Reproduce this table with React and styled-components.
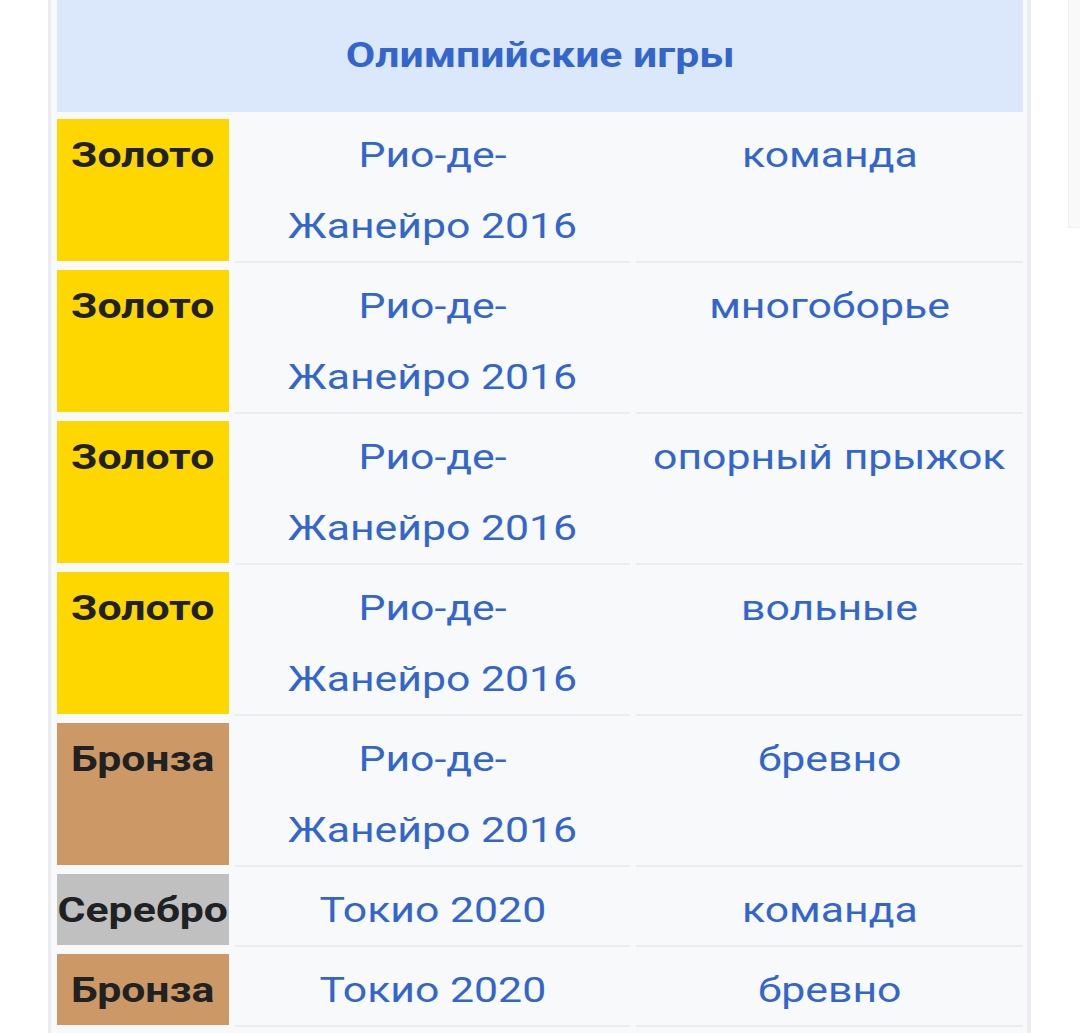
import React from "react";
import styled, { createGlobalStyle } from "styled-components";

const GlobalStyle = createGlobalStyle`
  html, body {
    margin: 0;
    padding: 0;
    background: #ffffff;
    overflow: hidden;
  }
  body {
    font-family: Roboto, "Noto Sans", "Liberation Sans", sans-serif;
  }
`;

const STRETCH = 1.222;

const Page = styled.div`
  display: flex;
  align-items: flex-start;
  width: 1080px;
  height: 1033px;
  overflow: hidden;
`;

const Infobox = styled.div`
  flex-shrink: 0;
  margin-left: 48px;
  width: 966px;
  background: #f8f9fa;
  border-left: 3px solid #eaecf0;
  border-right: 4px solid #eaecf0;
  padding: 0 4px 40px 6px;
  display: flex;
  flex-direction: column;
  gap: 7px;
`;

const Header = styled.div`
  background: #dbe8fc;
  color: #3366cc;
  font-weight: 700;
  font-size: 35px;
  line-height: 71px;
  text-align: center;
  padding: 19px 0 22px;
`;

const Text = styled.span`
  display: inline-block;
  max-width: ${(p) => (p.$max ? `${p.$max}px` : "none")};
  transform: translateY(1px) scaleX(${STRETCH});
  transform-origin: center center;
`;

const Row = styled.div`
  display: grid;
  grid-template-columns: 172px 395px 387px;
  column-gap: 6px;
`;

const MedalCell = styled.div`
  background: ${(p) => p.$bg};
  background-clip: padding-box;
  border-bottom: 2px solid #f8f9fa;
  color: #202122;
  font-weight: 700;
  font-size: 35px;
  line-height: 71px;
  text-align: center;
  white-space: nowrap;
`;

const DataCell = styled.div`
  border-bottom: 2px solid #eaecf0;
  color: #3366cc;
  font-weight: 400;
  font-size: 35px;
  line-height: 71px;
  text-align: center;
`;

const SideBox = styled.div`
  flex-shrink: 0;
  margin-left: 37px;
  width: 30px;
  height: 227px;
  background: #f9f9fa;
  border-left: 1px solid #f1f2f4;
  border-bottom: 1px solid #f1f2f4;
`;

const MEDALS = {
  gold: { label: "Золото", bg: "#ffd700" },
  silver: { label: "Серебро", bg: "#c0c0c0" },
  bronze: { label: "Бронза", bg: "#cc9966" },
};

const RIO = "Рио-де-Жанейро\u00a02016";
const TOKYO = "Токио 2020";

const rows = [
  { medal: "gold", games: RIO, event: "команда" },
  { medal: "gold", games: RIO, event: "многоборье" },
  { medal: "gold", games: RIO, event: "опорный прыжок" },
  { medal: "gold", games: RIO, event: "вольные" },
  { medal: "bronze", games: RIO, event: "бревно" },
  { medal: "silver", games: TOKYO, event: "команда" },
  { medal: "bronze", games: TOKYO, event: "бревно" },
];

export default function App() {
  return (
    <>
      <GlobalStyle />
      <Page>
        <Infobox>
          <Header>
            <Text>Олимпийские игры</Text>
          </Header>
          {rows.map((r, i) => (
            <Row key={i}>
              <MedalCell $bg={MEDALS[r.medal].bg}>
                <Text>{MEDALS[r.medal].label}</Text>
              </MedalCell>
              <DataCell>
                <Text $max={Math.floor(395 / STRETCH)}>{r.games}</Text>
              </DataCell>
              <DataCell>
                <Text $max={Math.floor(387 / STRETCH)}>{r.event}</Text>
              </DataCell>
            </Row>
          ))}
        </Infobox>
        <SideBox />
      </Page>
    </>
  );
}
